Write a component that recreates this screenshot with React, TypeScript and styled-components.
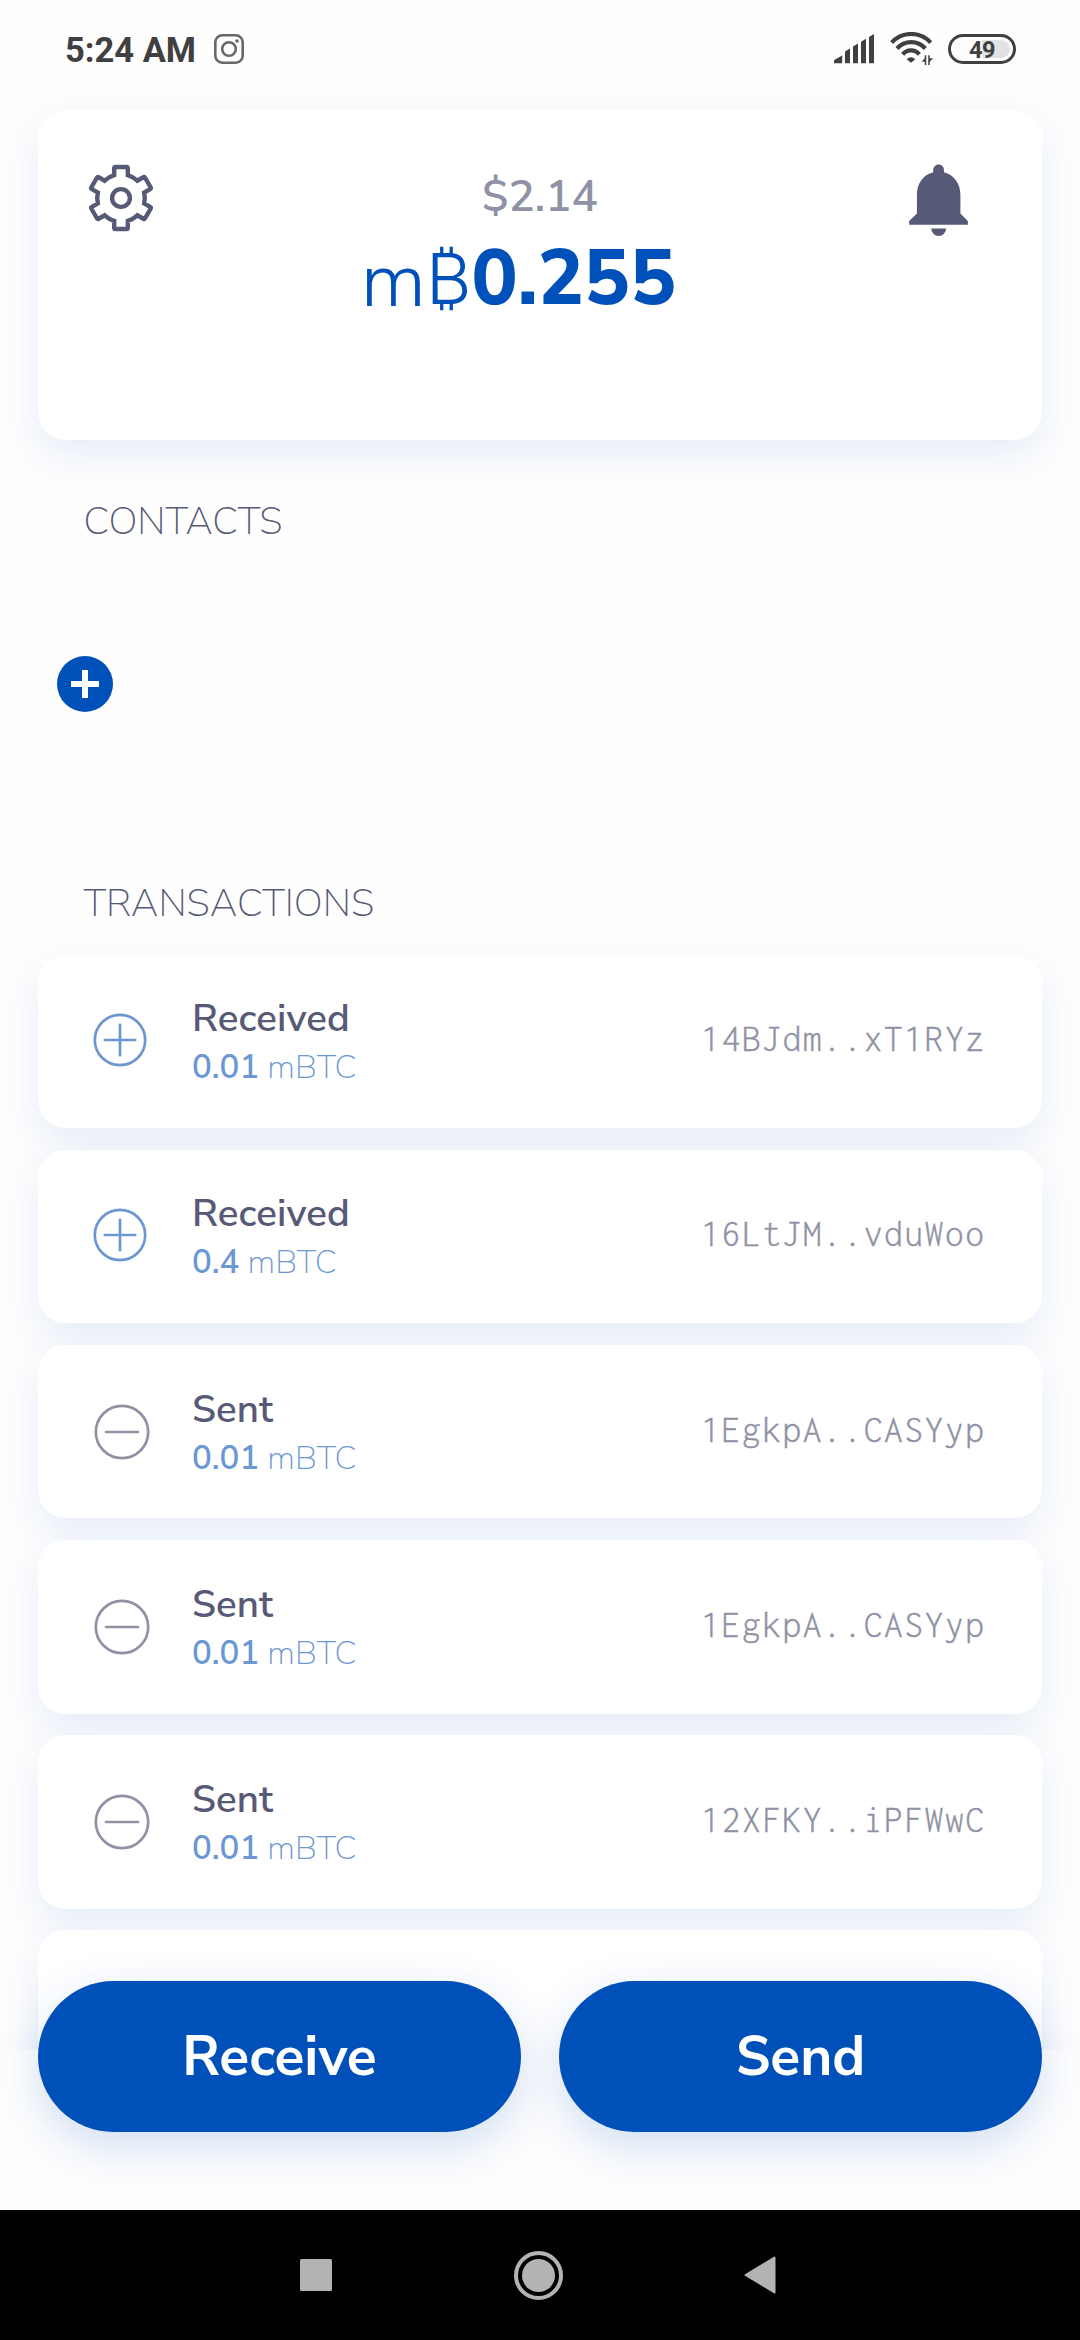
import React from "react";
import styled, { createGlobalStyle } from "styled-components";

const colors = {
  ink: "#575a76",
  muted: "#8f92a4",
  primary: "#0050ba",
  soft: "#6c98d2",
  status: "#404040",
};

const sans = `"Nunito Sans", Nunito, Lato, "Open Sans", sans-serif`;
const mono = `Inconsolata, "Liberation Mono", monospace`;

const GlobalStyle = createGlobalStyle`
  *, *::before, *::after { box-sizing: border-box; }
  body { margin: 0; background: #fefefe; font-family: ${sans}; color: ${colors.ink}; }
  svg { display: block; flex: none; }
  button { border: 0; padding: 0; font: inherit; }
`;

const Screen = styled.div`
  width: 1080px;
  height: 2340px;
  display: flex;
  flex-direction: column;
  overflow: hidden;
`;

/* Status bar */

const StatusBar = styled.header`
  height: 98px;
  flex: none;
  padding: 0 64px 0 65px;
  display: flex;
  align-items: center;
  justify-content: space-between;
`;

const StatusGroup = styled.div<{ $gap: number }>`
  display: flex;
  align-items: center;
  gap: ${(p) => p.$gap}px;
`;

const Clock = styled.span`
  padding-top: 2px;
  font: 700 34.5px/40px Roboto, sans-serif;
  color: ${colors.status};
  white-space: nowrap;
`;

const Battery = styled.div`
  width: 68px;
  height: 30px;
  border: 3.4px solid ${colors.status};
  border-radius: 15px;
  padding: 0 3px;
  display: flex;
  align-items: center;
  justify-content: center;
`;

const BatteryCharge = styled.div`
  flex: 1;
  height: 18px;
  border-radius: 9px;
  background: linear-gradient(90deg, transparent 50%, #e2e2e2 50%);
  display: flex;
  align-items: center;
  justify-content: center;
`;

const BatteryLevel = styled.span`
  padding-top: 1px;
  font: 700 23.5px/24px Roboto, sans-serif;
  letter-spacing: -0.6px;
  color: ${colors.status};
`;

/* Balance card */

const BalanceCard = styled.section`
  height: 330px;
  flex: none;
  margin: 12px 38px 0;
  padding-top: 56px;
  border-radius: 27px;
  background: #fff;
  box-shadow: 0 15px 42px rgba(0, 80, 185, 0.1);
  display: grid;
  grid-template-columns: 1fr auto 1fr;
  align-items: start;
`;

const SettingsSlot = styled.div`
  padding-left: 49px;
  margin-top: -2px;
`;

const BellSlot = styled.div`
  padding-right: 74px;
  margin-top: -2px;
  justify-self: end;
`;

const Balance = styled.div`
  display: flex;
  flex-direction: column;
  align-items: center;
`;

const Fiat = styled.div`
  padding-top: 1px;
  font-size: 44px;
  line-height: 60px;
  font-weight: 600;
  color: ${colors.muted};
`;

const Crypto = styled.div`
  margin-top: 2px;
  padding-right: 43px;
  height: 100px;
  font-size: 77px;
  line-height: 100px;
  font-weight: 800;
  color: ${colors.primary};
  white-space: nowrap;

  span { line-height: 1; }
`;

const Milli = styled.span`
  font-weight: 300;
  vertical-align: -2px;
`;

const BitcoinSign = styled.span`
  font-family: Inter, "Noto Sans", sans-serif;
  font-size: 70px;
  font-weight: 300;
`;

/* Sections */

const SectionTitle = styled.h2<{ $top: number }>`
  margin: ${(p) => p.$top}px 0 0 83.5px;
  flex: none;
  font-size: 38.5px;
  line-height: 50px;
  font-weight: 200;
  color: ${colors.ink};
`;

const AddContact = styled.button`
  width: 56px;
  height: 56px;
  flex: none;
  margin: 109px 0 0 57px;
  border-radius: 50%;
  background: ${colors.primary};
  display: grid;
  place-items: center;
`;

const TransactionList = styled.ul`
  list-style: none;
  margin: 0;
  height: 1121px;
  flex: none;
  overflow: hidden;
  padding: 25.5px 38px 0;
  display: flex;
  flex-direction: column;
  gap: 21.7px;
`;

const Row = styled.li`
  height: 173.5px;
  flex: none;
  padding-right: 56.5px;
  border-radius: 27px;
  background: #fff;
  box-shadow: 0 15px 42px rgba(0, 80, 185, 0.1);
  display: flex;
  align-items: center;
`;

const RowIcon = styled.div<{ $received: boolean }>`
  width: 154px;
  flex: none;
  padding-left: ${(p) => (p.$received ? 54.5 : 55.7)}px;
  padding-bottom: ${(p) => (p.$received ? 2 : 0)}px;
`;

const RowText = styled.div`
  flex: 1;
  padding-top: 5px;
`;

const Kind = styled.div`
  font-size: 38.5px;
  line-height: 48px;
  font-weight: 600;
  letter-spacing: 0.1px;
`;

const Amount = styled.div`
  padding-top: 1px;
  font-size: 33px;
  line-height: 48px;
  font-weight: 200;
  color: ${colors.soft};

  b { font-weight: 600; }
`;

const Address = styled.div`
  padding-bottom: 5px;
  font-family: ${mono};
  font-weight: 300;
  font-size: 37.5px;
  letter-spacing: 1.55px;
  color: ${colors.muted};
  -webkit-text-stroke: 0.4px ${colors.muted};
`;

/* Bottom actions and system navigation */

const Actions = styled.div`
  position: relative;
  height: 229px;
  flex: none;
  margin-top: -69px;
  padding: 0 38px;
  display: flex;
  align-items: flex-start;
  gap: 38px;
`;

const ActionButton = styled.button`
  && { font: 700 55px/151px ${sans}; }
  flex: 1;
  height: 151px;
  border-radius: 76px;
  background: ${colors.primary};
  color: #fff;
  text-align: center;
  box-shadow: 0 15px 48px rgba(0, 80, 185, 0.18);
`;

const NavBar = styled.nav`
  flex: 1;
  background: #000;
  padding: 0 304px 0 300px;
  display: flex;
  align-items: center;
  justify-content: space-between;
`;

const InstagramIcon = () => (
  <svg width="30" height="30" viewBox="0 0 30 30" fill="none" stroke="#686868">
    <rect x="1.3" y="1.3" width="27.4" height="27.4" rx="7" strokeWidth="2.6" />
    <circle cx="15" cy="15" r="6.8" strokeWidth="2.6" />
    <circle cx="23" cy="7" r="1.8" fill="#686868" stroke="none" />
  </svg>
);

const SignalIcon = () => (
  <svg width="40" height="30" viewBox="0 0 40 30" fill={colors.status}>
    <path d="M0 29.3V27Q0 26 1 25.4L8.2 21.4V29.3ZM11 29.3V17.6L16 14.6V29.3ZM19 29.3V12.6L24 9.4V29.3ZM27 29.3V7.8L32 4.8V29.3ZM35 29.3V3L40 0V29.3Z" />
  </svg>
);

const WifiIcon = () => (
  <svg width="43" height="34" viewBox="240 71 129 102" fill="none" stroke={colors.status}>
    <path d="M245 103A78.6 78.6 0 0 1 362 103M261 120.5A57 57 0 0 1 346 120.5M278 138A32 32 0 0 1 328 138" strokeWidth="12.5" />
    <path d="M290 152.5Q303 141 316 152.5L303 163Z" fill={colors.status} stroke="none" />
    <path d="M346.500 141V170M357 141V170" strokeWidth="4.5" />
    <path d="M347 147V160H335ZM356.500 163V150H369Z" fill={colors.status} stroke="none" />
  </svg>
);

/* One tooth of the cog spans 60 degrees; the outline repeats it six times. */
const cogPath = (() => {
  const half = 6.8;
  const body = 23.8;
  const tip = 31;
  const r = 1.3;
  const base = Math.sqrt(body * body - half * half);
  const at = (x: number, y: number, deg: number) => {
    const a = (deg * Math.PI) / 180;
    return `${(x * Math.cos(a) - y * Math.sin(a)).toFixed(2)} ${(x * Math.sin(a) + y * Math.cos(a)).toFixed(2)}`;
  };
  return (
    [0, 60, 120, 180, 240, 300]
      .map(
        (d, i) =>
          `${i ? `A${body} ${body} 0 0 1 ` : "M"}${at(-half, -base, d)}` +
          `L${at(-half, -tip + r, d)}Q${at(-half, -tip, d)} ${at(-half + r, -tip, d)}` +
          `L${at(half - r, -tip, d)}Q${at(half, -tip, d)} ${at(half, -tip + r, d)}L${at(half, -base, d)}`
      )
      .join("") + `A${body} ${body} 0 0 1 ${at(-half, -base, 0)}Z`
  );
})();

const SettingsIcon = () => (
  <svg width="68" height="68" viewBox="-34 -34 68 68" fill="none" stroke={colors.ink} strokeWidth="4.4">
    <path d={cogPath} />
    <circle r="8.9" />
  </svg>
);

const BellIcon = () => (
  <svg width="59" height="72" viewBox="147 191 177 217" fill={colors.ink}>
    <path d="M219.500 216V207.500A16.300 16.300 0 0 1 252 207.500V216C280 223 301.500 249 301.500 282V340L324 363V374H147V363L170.500 340V282C170.500 249 191 223 219.500 216Z" />
    <path d="M213.500 385.500H258.500A22.500 22.500 0 0 1 213.500 385.500Z" />
  </svg>
);

const PlusIcon = () => (
  <svg width="28" height="28" viewBox="0 0 28 28" fill="#fff">
    <path d="M11 0H17V11H28V17H17V28H11V17H0V11H11Z" />
  </svg>
);

const CirclePlusIcon = () => (
  <svg width="54" height="54" viewBox="0 0 54 54" fill="none" stroke={colors.soft} strokeWidth="2.7" strokeLinecap="round">
    <circle cx="27" cy="27" r="25.2" />
    <path d="M27 11.8V42.2M11.8 27H42.2" />
  </svg>
);

const CircleMinusIcon = () => (
  <svg width="56" height="56" viewBox="0 0 56 56" fill="none" stroke={colors.muted} strokeWidth="2.7" strokeLinecap="round">
    <circle cx="28" cy="28" r="26.2" />
    <path d="M12 28H44" />
  </svg>
);

type Transaction = { kind: "Received" | "Sent"; amount: string; address: string };

const transactions: Transaction[] = [
  { kind: "Received", amount: "0.01", address: "14BJdm..xT1RYz" },
  { kind: "Received", amount: "0.4", address: "16LtJM..vduWoo" },
  { kind: "Sent", amount: "0.01", address: "1EgkpA..CASYyp" },
  { kind: "Sent", amount: "0.01", address: "1EgkpA..CASYyp" },
  { kind: "Sent", amount: "0.01", address: "12XFKY..iPFWwC" },
];

const TransactionRow = ({ kind, amount, address }: Transaction) => (
  <Row>
    <RowIcon $received={kind === "Received"}>
      {kind === "Received" ? <CirclePlusIcon /> : <CircleMinusIcon />}
    </RowIcon>
    <RowText>
      <Kind>{kind}</Kind>
      <Amount>
        <b>{amount}</b> mBTC
      </Amount>
    </RowText>
    <Address>{address}</Address>
  </Row>
);

export default function App() {
  return (
    <Screen>
      <GlobalStyle />
      <StatusBar>
        <StatusGroup $gap={18}>
          <Clock>5:24 AM</Clock>
          <InstagramIcon />
        </StatusGroup>
        <StatusGroup $gap={15.5}>
          <SignalIcon />
          <WifiIcon />
          <Battery>
            <BatteryCharge>
              <BatteryLevel>49</BatteryLevel>
            </BatteryCharge>
          </Battery>
        </StatusGroup>
      </StatusBar>

      <BalanceCard>
        <SettingsSlot>
          <SettingsIcon />
        </SettingsSlot>
        <Balance>
          <Fiat>$2.14</Fiat>
          <Crypto>
            <Milli>m</Milli>
            <BitcoinSign>₿</BitcoinSign>
            <span>0.255</span>
          </Crypto>
        </Balance>
        <BellSlot>
          <BellIcon />
        </BellSlot>
      </BalanceCard>

      <SectionTitle $top={57}>CONTACTS</SectionTitle>
      <AddContact aria-label="Add contact">
        <PlusIcon />
      </AddContact>

      <SectionTitle $top={167}>TRANSACTIONS</SectionTitle>
      <TransactionList>
        {transactions.map((t, i) => (
          <TransactionRow key={i} {...t} />
        ))}
        <Row />
      </TransactionList>

      <Actions>
        <ActionButton>Receive</ActionButton>
        <ActionButton>Send</ActionButton>
      </Actions>

      <NavBar>
        <svg width="32" height="32" viewBox="0 0 32 32" fill="#b3b3b3">
          <rect width="32" height="32" rx="1.5" />
        </svg>
        <svg width="49" height="49" viewBox="0 0 49 49" fill="none" stroke="#b3b3b3">
          <circle cx="24.5" cy="24.5" r="22.5" strokeWidth="4" />
          <circle cx="24.5" cy="24.5" r="16.5" fill="#b3b3b3" stroke="none" />
        </svg>
        <svg width="32" height="38" viewBox="0 0 32 38" fill="#b3b3b3" stroke="#b3b3b3" strokeLinejoin="round" strokeWidth="2">
          <path d="M1.5 19L30.5 1.5V36.5Z" />
        </svg>
      </NavBar>
    </Screen>
  );
}
